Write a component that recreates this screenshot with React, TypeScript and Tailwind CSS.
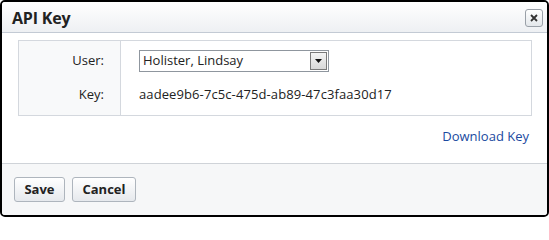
import React from 'react';

const font = { fontFamily: '"Open Sans", "Noto Sans", Arial, sans-serif' };

const ApiKeyDialog: React.FC = () => {
  return (
    <div className="w-[549px] h-[217px] bg-white" style={font}>
      <div className="flex flex-col w-full h-full border-2 border-black rounded-[5px] overflow-hidden bg-white">
        {/* header */}
        <div className="flex items-center justify-between h-[31px] shrink-0 pl-[10px] pr-[4px] border-b border-[#c3cad4] bg-gradient-to-b from-white to-[#eef0f3]">
          <h2 className="text-[16px] font-bold text-[#222] tracking-[-0.2px] pt-[1px]">API Key</h2>
          <button className="flex items-center justify-center w-[18px] h-[18px] mt-[2px] border border-[#9aa0a8] rounded-[3px] bg-gradient-to-b from-white to-[#e4e7eb] text-[#333]">
            <svg width="8" height="8" viewBox="0 0 8 8">
              <path d="M1 1 L7 7 M7 1 L1 7" stroke="#333" strokeWidth="1.8" />
            </svg>
          </button>
        </div>

        {/* body */}
        <div className="flex-1 flex flex-col px-[16px] pt-[7px]">
          <div className="grid grid-cols-[102px_1fr] border border-[#d4d8de] text-[13px] text-[#222] w-[514px]">
            <div className="flex flex-col bg-[#f8f9fa] border-r border-[#d4d8de] text-right pr-[16px]">
              <div className="h-[39px] flex items-center justify-end">User:</div>
              <div className="h-[35px] flex items-center justify-end pb-[5px]">Key:</div>
            </div>
            <div className="flex flex-col pl-[18px]">
              <div className="h-[39px] flex items-center">
                <div className="flex items-center w-[190px] h-[22px] border border-[#8f969e] bg-white">
                  <span className="flex-1 pl-[3px] text-[13px] leading-none">Holister, Lindsay</span>
                  <span className="flex items-center justify-center w-[17px] h-[18px] mr-[1px] border border-[#7a7a7a] bg-gradient-to-b from-[#f4f4f4] to-[#d8d8d8]">
                    <svg width="7" height="4" viewBox="0 0 7 4">
                      <path d="M0 0 H7 L3.5 4 Z" fill="#111" />
                    </svg>
                  </span>
                </div>
              </div>
              <div className="h-[35px] flex items-center pb-[5px] tracking-[0.1px]">aadee9b6-7c5c-475d-ab89-47c3faa30d17</div>
            </div>
          </div>
          <div className="flex justify-end pr-[2px] pt-[11px]">
            <a className="text-[13px] text-[#1a4aa0] cursor-pointer">Download Key</a>
          </div>
        </div>

        {/* footer */}
        <div className="h-[52px] shrink-0 flex items-center gap-[7px] px-[12px] border-t border-[#cfd3d8] bg-[#f6f7f8]">
          <button className="w-[51px] h-[25px] text-[13px] font-bold text-[#222] border border-[#aeb5bd] rounded-[3px] bg-gradient-to-b from-white to-[#e6e9ed]">
            Save
          </button>
          <button className="w-[64px] h-[25px] text-[13px] font-bold text-[#222] border border-[#aeb5bd] rounded-[3px] bg-gradient-to-b from-white to-[#e6e9ed]">
            Cancel
          </button>
        </div>
      </div>
    </div>
  );
};

export default function App() {
  return <ApiKeyDialog />;
}
